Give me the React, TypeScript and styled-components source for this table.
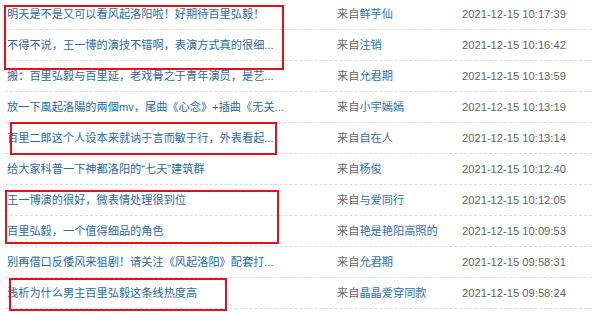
import React from 'react';
import styled, { createGlobalStyle } from 'styled-components';

const GlobalStyle = createGlobalStyle`
  html, body {
    margin: 0;
    padding: 0;
    background: #fff;
  }
  body {
    width: 600px;
    height: 312px;
    overflow: hidden;
    font-family: 'Liberation Sans', 'Noto Sans CJK SC', sans-serif;
  }
`;

interface Post {
  id: number;
  title: string;
  author: string;
  time: string;
}

const posts: Post[] = [
  { id: 1, title: '明天是不是又可以看风起洛阳啦！好期待百里弘毅！', author: '鲜芋仙', time: '2021-12-15 10:17:39' },
  { id: 2, title: '不得不说，王一博的演技不错啊，表演方式真的很细...', author: '注销', time: '2021-12-15 10:16:42' },
  { id: 3, title: '搬：百里弘毅与百里延，老戏骨之于青年演员，是艺...', author: '允君期', time: '2021-12-15 10:13:59' },
  { id: 4, title: '放一下風起洛陽的兩個mv，尾曲《心念》+插曲《无关...', author: '小宇嫣嫣', time: '2021-12-15 10:13:19' },
  { id: 5, title: '百里二郎这个人设本来就讷于言而敏于行，外表看起...', author: '自在人', time: '2021-12-15 10:13:14' },
  { id: 6, title: '给大家科普一下神都洛阳的“七天”建筑群', author: '杨俊', time: '2021-12-15 10:12:40' },
  { id: 7, title: '王一博演的很好，微表情处理很到位', author: '与爱同行', time: '2021-12-15 10:12:05' },
  { id: 8, title: '百里弘毅，一个值得细品的角色', author: '艳是艳阳高照的', time: '2021-12-15 10:09:53' },
  { id: 9, title: '别再借口反倭风来狙剧！请关注《风起洛阳》配套打...', author: '允君期', time: '2021-12-15 09:58:31' },
  { id: 10, title: '浅析为什么男主百里弘毅这条线热度高', author: '晶晶爱穿同款', time: '2021-12-15 09:58:24' },
];

interface Mark {
  left: number;
  top: number;
  width: number;
  height: number;
}

const marks: Mark[] = [
  { left: 4, top: 5, width: 280, height: 65 },
  { left: 10, top: 122, width: 267, height: 33 },
  { left: 5, top: 190, width: 274, height: 54 },
  { left: 9, top: 278, width: 218, height: 33 },
];

const Board = styled.div`
  position: relative;
  width: 600px;
  height: 312px;
  overflow: hidden;
`;

const List = styled.ul`
  list-style: none;
  margin: -1px 0 0 5px;
  padding: 0;
  width: 587px;
`;

const Row = styled.li`
  display: grid;
  grid-template-columns: 330px 125px 1fr;
  height: 30px;
  line-height: 30px;
  padding-left: 2px;
  border-bottom: 1px dashed #dcdcdc;
  font-size: 11.2px;
  white-space: nowrap;
`;

const Title = styled.a`
  color: #2b6aa6;
  text-decoration: none;
  overflow: hidden;
`;

const Source = styled.span`
  color: #666;
`;

const Author = styled.a`
  color: #2f70b0;
  text-decoration: none;
`;

const Time = styled.span`
  color: #666;
`;

const Highlight = styled.div`
  position: absolute;
  box-sizing: border-box;
  border: 2px solid #e1121c;
  pointer-events: none;
`;

export default function App() {
  return (
    <>
      <GlobalStyle />
      <Board>
        <List>
          {posts.map((post) => (
            <Row key={post.id}>
              <Title href="#">{post.title}</Title>
              <Source>
                来自<Author href="#">{post.author}</Author>
              </Source>
              <Time>{post.time}</Time>
            </Row>
          ))}
        </List>
        {marks.map((m, i) => (
          <Highlight
            key={i}
            style={{ left: m.left, top: m.top, width: m.width, height: m.height }}
          />
        ))}
      </Board>
    </>
  );
}
